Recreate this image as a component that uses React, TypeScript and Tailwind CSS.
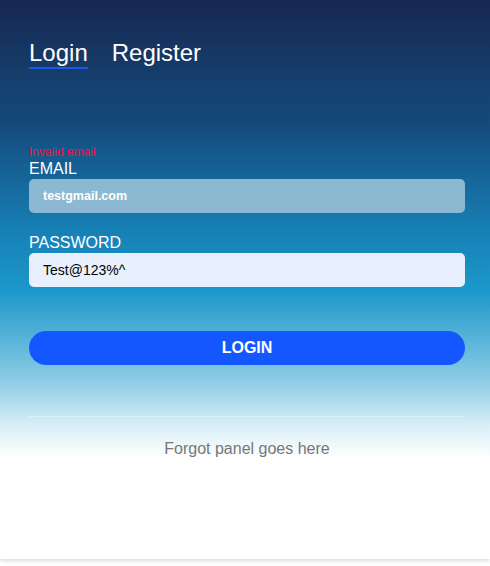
import { useState } from "react";

function App() {
  const [email, setEmail] = useState("testgmail.com");
  const [password, setPassword] = useState("Test@123%^");

  return (
    <div className="min-h-screen bg-white font-['Liberation_Sans',Arial,sans-serif]">
      <div className="h-[559px] w-full bg-[linear-gradient(180deg,#172852_0%,#144a7b_22%,#1782b7_42%,#1c98ca_52%,#8ccbe5_68%,#d8eef6_76%,#ffffff_82%)] shadow-[0_2px_4px_rgba(0,0,0,0.14)]">
        <div className="pl-[29px] pr-[25px] pt-[37px]">
          {/* tabs */}
          <div className="flex gap-[24px] text-2xl text-white">
            <span className="border-b-2 border-[#1c58e8] h-8">Login</span>
            <span className="h-8">Register</span>
          </div>

          <form className="mt-[76px]" onSubmit={(e) => e.preventDefault()}>
            <p className="text-[12px] leading-[15px] text-[#e8174a]">
              Invalid email
            </p>
            <label className="block text-base leading-[18px] text-white">
              EMAIL
            </label>
            <input
              className="mt-px h-[34px] w-full rounded-[5px] bg-[#8cb8d1] px-[14px] text-[12.5px] font-bold text-white outline-none"
              value={email}
              onChange={(e) => setEmail(e.target.value)}
            />

            <label className="mt-[21px] block text-base leading-[18px] text-white">
              PASSWORD
            </label>
            <input
              className="mt-px h-[34px] w-full rounded-[5px] bg-[#e8f0fe] px-[14px] text-sm text-black outline-none"
              value={password}
              onChange={(e) => setPassword(e.target.value)}
            />

            <button className="mt-[44px] h-[34px] w-full rounded-full bg-[#1557ff] text-base font-bold text-white">
              LOGIN
            </button>
          </form>

          <div className="mt-[51px] h-px bg-white/40" />

          <p className="mt-[20px] text-center text-base text-[#777777]">
            Forgot panel goes here
          </p>
        </div>
      </div>
    </div>
  );
}

export default App;
